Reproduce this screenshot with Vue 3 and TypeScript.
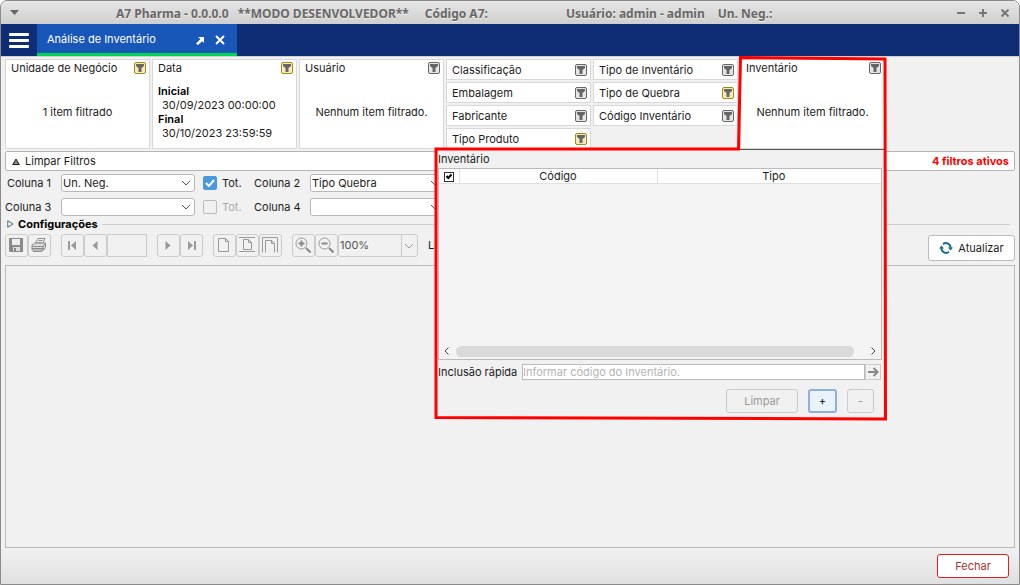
<script setup lang="ts">
import { ref } from 'vue'

interface Filter {
  label: string
  active: boolean
}

const classFilters: Filter[] = [
  { label: 'Classificação', active: false },
  { label: 'Embalagem', active: false },
  { label: 'Fabricante', active: false },
  { label: 'Tipo Produto', active: true },
]
const typeFilters: Filter[] = [
  { label: 'Tipo de Inventário', active: false },
  { label: 'Tipo de Quebra', active: true },
  { label: 'Código Inventário', active: false },
]

const column1 = ref('Un. Neg.')
const column2 = ref('Tipo Quebra')
const column3 = ref('')
const column4 = ref('')
const total1 = ref(true)
const total3 = ref(false)
const allSelected = ref(true)
const quickCode = ref('')
</script>

<template>
  <svg class="defs" width="0" height="0" aria-hidden="true">
    <symbol id="funnel" viewBox="0 0 12 12">
      <rect x="0.5" y="0.5" width="11" height="11" rx="1.5" fill="currentColor" stroke="var(--edge)" />
      <path d="M2 2h8v2L7.500 6V10h-3V6L2 4z" fill="#666" />
    </symbol>
    <symbol id="chevron" viewBox="0 0 10 6">
      <path d="M1 1l4 4 4-4" fill="none" stroke="currentColor" stroke-width="1" />
    </symbol>
  </svg>

  <div class="window">
    <header class="titlebar">
      <button class="tb menu" aria-label="Menu da janela">
        <svg width="9" height="5" viewBox="0 0 9 5"><path d="M0 0h9L4.500 5z" fill="#666" /></svg>
      </button>
      <h1 class="title">
        <span>A7 Pharma - 0.0.0.0</span>
        <span class="mode">**MODO DESENVOLVEDOR**</span>
        <span class="code">Código A7:</span>
        <span class="user">Usuário: admin - admin</span>
        <span>Un. Neg.:</span>
      </h1>
      <div class="controls">
        <button class="tb" aria-label="Minimizar">
          <svg width="8" height="8" viewBox="0 0 8 8"><path d="M0 4h8" stroke="#777" stroke-width="2" /></svg>
        </button>
        <button class="tb" aria-label="Maximizar">
          <svg width="8" height="8" viewBox="0 0 8 8"><path d="M0 4h8M4 0v8" stroke="#777" stroke-width="2" /></svg>
        </button>
        <button class="tb" aria-label="Fechar janela">
          <svg width="8" height="8" viewBox="0 0 8 8"><path d="M.5.5l7 7M7.500.5l-7 7" stroke="#777" stroke-width="2" /></svg>
        </button>
      </div>
    </header>

    <nav class="nav">
      <button class="burger" aria-label="Menu principal"><i></i><i></i><i></i></button>
      <div class="tab">
        <span class="tab-label">Análise de Inventário</span>
        <button aria-label="Destacar aba">
          <svg width="9" height="10" viewBox="0 0 9 10"><path d="M2 2h6v6L6.300 6.300 2 10 0 8.500l4.500-4.500z" fill="#fff" /></svg>
        </button>
        <button aria-label="Fechar aba">
          <svg width="10" height="10" viewBox="0 0 10 10"><path d="M1 1l8 8M9 1L1 9" stroke="#fff" stroke-width="2" /></svg>
        </button>
      </div>
    </nav>

    <main class="content">
      <section class="filters">
        <article class="card">
          <div class="card-head">
            <span>Unidade de Negócio</span>
            <button class="funnel on" aria-label="Filtrar Unidade de Negócio"><svg><use href="#funnel" /></svg></button>
          </div>
          <p class="card-text">1 item filtrado</p>
        </article>
        <article class="card">
          <div class="card-head">
            <span>Data</span>
            <button class="funnel on" aria-label="Filtrar Data"><svg><use href="#funnel" /></svg></button>
          </div>
          <dl class="dates">
            <dt>Inicial</dt>
            <dd>30/09/2023 00:00:00</dd>
            <dt>Final</dt>
            <dd>30/10/2023 23:59:59</dd>
          </dl>
        </article>
        <article class="card">
          <div class="card-head">
            <span>Usuário</span>
            <button class="funnel" aria-label="Filtrar Usuário"><svg><use href="#funnel" /></svg></button>
          </div>
          <p class="card-text">Nenhum item filtrado.</p>
        </article>
        <div v-for="(group, i) in [classFilters, typeFilters]" :key="i" class="stack">
          <div v-for="f in group" :key="f.label" class="mini">
            <span>{{ f.label }}</span>
            <button class="funnel" :class="{ on: f.active }" :aria-label="'Filtrar ' + f.label">
              <svg><use href="#funnel" /></svg>
            </button>
          </div>
        </div>
        <div class="anchor">
          <article class="card">
            <div class="card-head">
              <span>Inventário</span>
              <button class="funnel" aria-label="Filtrar Inventário"><svg><use href="#funnel" /></svg></button>
            </div>
            <p class="card-text">Nenhum item filtrado.</p>
          </article>

          <section class="popup">
            <h2 class="popup-title">Inventário</h2>
            <div class="list">
              <table>
                <thead>
                  <tr>
                    <th class="pick"><input v-model="allSelected" type="checkbox" class="tick small" aria-label="Selecionar todos" /><svg width="8" height="7" viewBox="0 0 8 7"><path d="M1.500 3l1.800 2L6.500 1.500" /></svg></th>
                    <th class="col-code">Código</th>
                    <th class="col-type">Tipo</th>
                  </tr>
                </thead>
                <tbody></tbody>
              </table>
              <div class="scroll">
                <button aria-label="Rolar para a esquerda"><svg width="5" height="8" viewBox="0 0 5 8"><path d="M4.500.5L1 4l3.500 3.500" /></svg></button>
                <div class="thumb"></div>
                <button aria-label="Rolar para a direita"><svg width="5" height="8" viewBox="0 0 5 8"><path d="M.5.5L4 4 .5 7.500" /></svg></button>
              </div>
            </div>
            <div class="quick">
              <label for="quick">Inclusão rápida</label>
              <input id="quick" v-model="quickCode" type="text" placeholder="Informar código do Inventário." />
              <button aria-label="Incluir">
                <svg width="11" height="10" viewBox="0 0 11 10"><path d="M0 5h9M5.500 1l4 4-4 4" fill="none" stroke="#888" stroke-width="2" /></svg>
              </button>
            </div>
            <div class="actions">
              <button class="clear" disabled>Limpar</button>
              <button class="plus">+</button>
              <button class="minus" disabled>-</button>
            </div>
          </section>

          <svg class="outline" viewBox="0 0 454 366" aria-hidden="true">
            <path d="M306.500 2.500L451 4l.5 360L2 362.500V94h302.500z" />
          </svg>
        </div>
      </section>

      <div class="clearbar">
        <button>
          <svg width="8" height="7" viewBox="0 0 8 7"><path d="M4 1L7.300 6.500H.7z" fill="#888" stroke="#222" /></svg>
          Limpar Filtros
        </button>
        <strong>4 filtros ativos</strong>
      </div>

      <div class="columns">
        <label for="c1">Coluna 1</label>
        <div class="select"><select id="c1" v-model="column1"><option>Un. Neg.</option><option value=""></option></select><svg><use href="#chevron" /></svg></div>
        <label class="tot"><input v-model="total1" type="checkbox" class="tick" /><svg width="10" height="8" viewBox="0 0 10 8"><path d="M1 4l3 3L9 1" /></svg>Tot.</label>
        <label for="c2">Coluna 2</label>
        <div class="select"><select id="c2" v-model="column2"><option>Tipo Quebra</option><option value=""></option></select><svg><use href="#chevron" /></svg></div>
        <label for="c3">Coluna 3</label>
        <div class="select"><select id="c3" v-model="column3"><option value=""></option></select><svg><use href="#chevron" /></svg></div>
        <label class="tot off"><input v-model="total3" type="checkbox" class="tick" disabled />Tot.</label>
        <label for="c4">Coluna 4</label>
        <div class="select"><select id="c4" v-model="column4"><option value=""></option></select><svg><use href="#chevron" /></svg></div>
      </div>

      <button class="config">
        <svg width="7" height="8" viewBox="0 0 7 8"><path d="M.8.8L6 4 .8 7.200z" fill="#fff" stroke="#376b72" /></svg>
        <span>Configurações</span>
      </button>

      <div class="tools">
        <div class="toolset">
          <button aria-label="Salvar">
            <svg width="14" height="14" viewBox="0 0 14 14"><path d="M0 0h14v14H1l-1-1z" fill="#8b8b8b" /><path d="M3 1h8v6H3z" fill="#eee" /><path d="M4 9h7v4H4z" fill="#ddd" /><path d="M5 10h2v3H5z" fill="#888" /></svg>
          </button>
          <button aria-label="Imprimir">
            <svg width="16" height="14" viewBox="0 0 16 14" fill="none" stroke="#8b8b8b"><path d="M4 6L7 .5h7L11.500 6M7.500 2.500h4M6.500 4.500h4" /><path d="M1 7l3-2h10.500v4L12 12H1z" fill="#ddd" /><path d="M1 8.500h11l2.500-3M1 10.500h11M2 13.500h9l3-3M12 8v4" /></svg>
          </button>
        </div>
        <div class="toolset">
          <button aria-label="Primeira página"><svg width="9" height="9" viewBox="0 0 9 9"><path d="M0 0h2v9H0zM8 0v9L3 4.500z" fill="#999" /></svg></button>
          <button aria-label="Página anterior"><svg width="6" height="9" viewBox="0 0 6 9"><path d="M5.500 0v9L.5 4.500z" fill="#999" /></svg></button>
          <input class="page" type="text" aria-label="Página" disabled />
        </div>
        <div class="toolset next">
          <button aria-label="Próxima página"><svg width="6" height="9" viewBox="0 0 6 9"><path d="M.5 0v9l5-4.500z" fill="#999" /></svg></button>
          <button aria-label="Última página"><svg width="9" height="9" viewBox="0 0 9 9"><path d="M1 0v9l5-4.500zM7 0h2v9H7z" fill="#999" /></svg></button>
        </div>
        <div class="toolset">
          <button aria-label="Tamanho real"><svg width="12" height="14" viewBox="0 0 12 14"><path d="M.5.5h7l3 3v10H.5zM7.500.5v3h3" class="line" /></svg></button>
          <button aria-label="Página inteira"><svg width="16" height="16" viewBox="0 0 16 16"><path d="M0 .5h16M0 14.500h16M4.500 2.500h5l3 3v7h-8zM9.500 2.500v3h3" class="line" /></svg></button>
          <button aria-label="Largura da página"><svg width="16" height="16" viewBox="0 0 16 16"><path d="M.5 15.500V.5h15v15M3.500 15.500v-12h6l3 3v9M9.500 3.500v3h3" class="line" /></svg></button>
        </div>
        <div class="toolset">
          <button aria-label="Aumentar zoom"><svg width="16" height="16" viewBox="0 0 16 16"><circle cx="6.500" cy="6.500" r="5.500" class="line" /><path d="M6.500 3.500v6M3.500 6.500h6" stroke="#888" stroke-width="2" /><path d="M11 11l4.500 4.500" stroke="#888" stroke-width="2" /></svg></button>
          <button aria-label="Diminuir zoom"><svg width="16" height="16" viewBox="0 0 16 16"><circle cx="6.500" cy="6.500" r="5.500" class="line" /><path d="M3.500 6.500h6" stroke="#888" stroke-width="2" /><path d="M11 11l4.500 4.500" stroke="#888" stroke-width="2" /></svg></button>
          <div class="select zoom"><select aria-label="Zoom" disabled><option>100%</option></select><svg><use href="#chevron" /></svg></div>
        </div>
        <span class="lines">Linhas</span>
        <button class="refresh">
          <svg width="14" height="12" viewBox="0 0 14 12"><g fill="none" stroke="#1d6f83" stroke-width="2"><path d="M4 2.200A4.600 4.600 0 0 1 11.500 6M10 9.800A4.600 4.600 0 0 1 2.500 6" /></g><path d="M9 5.500h5L11.500 8.500zM0 6.500h5L2.500 3.500z" fill="#1d6f83" /></svg>
          Atualizar
        </button>
      </div>

      <section class="report" aria-label="Relatório"></section>
    </main>

    <footer class="footer"><button class="close">Fechar</button></footer>
  </div>
</template>

<style>
body {
  background: #fff;
}
</style>

<style scoped>
.defs {
  position: absolute;
}
.window,
.window * {
  box-sizing: border-box;
}
.window {
  display: flex;
  flex-direction: column;
  min-height: 100vh;
  border: 1px solid #8a8a8a;
  border-radius: 7px 7px 0 0;
  overflow: hidden;
  background: #f1f1f1;
  color: #1c1c1c;
  font: 11px/14px Inter, "Open Sans", sans-serif;
}
.window svg {
  display: block;
  flex: none;
}
button,
input,
select {
  margin: 0;
  padding: 0;
  border: 0;
  background: none;
  color: inherit;
  font: inherit;
}
.titlebar {
  display: flex;
  align-items: center;
  height: 23px;
  padding: 0 10px 0 9px;
  background: linear-gradient(#e6e6e6, #cfcfcf);
}
.tb {
  display: flex;
}
.title {
  flex: 1;
  display: flex;
  gap: 9px;
  margin: 0;
  padding: 2px 0 0 97px;
  color: #686868;
  font: bold 12px/18px "Noto Sans", sans-serif;
  text-shadow: 0 1px #eee;
  white-space: nowrap;
}
.mode {
  margin-right: 7px;
}
.code {
  margin-right: 69px;
}
.user {
  margin-right: 4px;
}
.controls {
  display: flex;
  gap: 14px;
}
.nav {
  display: flex;
  height: 32px;
  background: #0e2d75;
}
.burger {
  display: flex;
  flex-direction: column;
  justify-content: center;
  gap: 3px;
  width: 36px;
  padding-left: 8px;
}
.burger i {
  width: 20px;
  height: 3px;
  border-radius: 1px;
  background: #fff;
}
.tab {
  display: flex;
  align-items: center;
  gap: 10px;
  width: 200px;
  padding: 3px 12px 0 10px;
  border-bottom: 3px solid #00d455;
  background: #1857b8;
  color: #fff;
}
.tab-label {
  flex: 1;
  padding-bottom: 2px;
}
.content {
  flex: 1;
  display: flex;
  flex-direction: column;
  padding: 2px 4px 0;
  border-top: 1px solid #d0d0d0;
}
.filters {
  display: grid;
  grid-template-columns: repeat(6, 145px);
  gap: 2px;
  height: 90px;
}
.card,
.mini {
  border: 1px solid #d8d8d8;
  background: #fff;
}
.card {
  display: flex;
  flex-direction: column;
  height: 90px;
}
.card-head,
.mini {
  display: flex;
  align-items: center;
  justify-content: space-between;
  padding: 0 3px 0 5px;
}
.card-head {
  height: 15px;
}
.card-text {
  flex: 1;
  margin: 0;
  padding-top: 30px;
  text-align: center;
}
.dates {
  margin: 9px 0 0 5px;
}
.dates dt {
  color: #000;
  font-weight: 600;
}
.dates dd {
  margin: 0 0 0 4px;
}
.stack {
  display: flex;
  flex-direction: column;
  gap: 2px;
}
.mini {
  height: 21px;
}
.funnel {
  --edge: #666;
  color: #e6e6e6;
}
.funnel.on {
  --edge: #a98a10;
  color: #f3ebbc;
}
.funnel svg {
  width: 12px;
  height: 12px;
}
.anchor {
  position: relative;
}
.popup {
  position: absolute;
  z-index: 1;
  top: 90px;
  right: 0;
  width: 448px;
  height: 270px;
  padding: 0 3px 0 1px;
  border-top: 1px solid #555;
  background: #f1f1f1;
}
.popup-title {
  margin: 0;
  font: inherit;
  line-height: 18px;
}
.list {
  display: flex;
  flex-direction: column;
  justify-content: space-between;
  height: 192px;
  border: 1px solid #bbb;
  background: #f4f4f4;
}
.list table {
  width: 100%;
  border-collapse: collapse;
  table-layout: fixed;
  background: #fff;
}
.list th {
  height: 14px;
  padding: 0;
  border-right: 1px solid #e0e0e0;
  border-bottom: 1px solid #e0e0e0;
  font-weight: 400;
  line-height: 14px;
}
.list .col-type {
  padding-left: 9px;
  border-right: 0;
}
.pick {
  position: relative;
  width: 20px;
}
.col-code {
  width: 198px;
}
.tick {
  appearance: none;
  display: block;
  width: 14px;
  height: 14px;
  border: 1px solid #bbb;
  border-radius: 2px;
}
.tick:checked {
  border-color: #4a98e0;
  background: #4a98e0;
}
.tick.small {
  width: 10px;
  height: 10px;
  margin: 1px auto 0;
  border: 1px solid #333;
  border-radius: 0;
  background: #fff;
}
.pick svg {
  position: absolute;
  top: 4px;
  left: 6px;
  fill: none;
  stroke: #000;
  stroke-width: 2;
  pointer-events: none;
}
.scroll {
  display: flex;
  align-items: center;
  justify-content: space-between;
  height: 16px;
  padding: 0 5px;
}
.scroll path {
  fill: none;
  stroke: #444;
  stroke-width: 1;
}
.thumb {
  flex: 1;
  height: 11px;
  margin: 0 17px 0 7px;
  border-radius: 6px;
  background: #dadada;
}
.quick {
  display: flex;
  align-items: center;
  height: 16px;
  margin: 4px 1px 0 0;
}
.quick label {
  width: 84px;
}
.quick input {
  flex: 1;
  height: 16px;
  border: 1px solid #bbb;
  background: #fff;
}
.quick input::placeholder {
  color: #b4b4b4;
  opacity: 1;
}
.quick button {
  display: flex;
  align-items: center;
  justify-content: center;
  width: 16px;
  height: 16px;
  border: 1px solid #ccc;
}
.actions {
  display: flex;
  justify-content: flex-end;
  gap: 10px;
  margin: 9px 8px 0 0;
}
.actions button {
  width: 27px;
  height: 24px;
  border: 1px solid #ccc;
  border-radius: 3px;
  color: #999;
}
.actions .clear {
  width: 72px;
}
.actions .plus {
  width: 29px;
  border: 2px solid #8db1d8;
  background: #eaf3fc;
  color: #000;
}
.outline {
  position: absolute;
  z-index: 2;
  top: -4px;
  right: -3px;
  width: 454px;
  height: 366px;
  fill: none;
  stroke: #f00;
  stroke-width: 3;
  pointer-events: none;
}
.clearbar {
  display: flex;
  align-items: center;
  justify-content: space-between;
  height: 20px;
  margin-top: 2px;
  padding: 0 5px 0 6px;
  border: 1px solid #b4b4b4;
  border-radius: 2px;
  background: #fff;
}
.clearbar button {
  display: flex;
  align-items: center;
  gap: 5px;
}
.clearbar strong {
  color: #f00;
  font-weight: 700;
}
.columns {
  display: grid;
  grid-template-columns: 48px 134px 43px 48px 134px;
  column-gap: 8px;
  row-gap: 6px;
  align-items: center;
  margin-top: 3px;
}
.columns > label:not(.tot) {
  padding-right: 2px;
  text-align: right;
  white-space: nowrap;
}
.select {
  position: relative;
  height: 18px;
  border: 1px solid #b8b8b8;
  border-radius: 3px;
  background: #fff;
}
.select select {
  appearance: none;
  display: block;
  width: 100%;
  height: 16px;
  padding-left: 1px;
}
.select svg {
  position: absolute;
  top: 5px;
  right: 3px;
  width: 10px;
  height: 6px;
  color: #555;
  pointer-events: none;
}
.tot {
  position: relative;
  display: flex;
  align-items: center;
  gap: 5px;
}
.tot svg {
  position: absolute;
  left: 2px;
  fill: none;
  stroke: #fff;
  stroke-width: 2;
}
.off {
  color: #aaa;
}
.config {
  display: flex;
  align-items: center;
  gap: 4px;
  height: 16px;
  padding: 0 5px 0 2px;
  color: #000;
  font-weight: 700;
}
.config::after {
  content: "";
  flex: 1;
  border-top: 1px solid #ccc;
}
.tools {
  display: flex;
  align-items: flex-start;
  gap: 10px;
  margin-top: 2px;
}
.toolset {
  display: flex;
}
.toolset button {
  display: flex;
  align-items: center;
  justify-content: center;
  width: 23px;
  height: 23px;
  padding: 0 1px 1px 0;
  border: 1px solid #ccc;
  border-radius: 3px;
}
.line {
  fill: none;
  stroke: #999;
}
.page {
  width: 40px;
  height: 23px;
  border: 1px solid #ccc;
}
.zoom {
  width: 80px;
  height: 23px;
  border-color: #ccc;
  background: #f1f1f1;
}
.zoom select {
  height: 21px;
  padding-bottom: 1px;
  color: #555;
  opacity: 1;
}
.zoom::after {
  content: "";
  position: absolute;
  inset: 0 15px 0 auto;
  border-left: 1px solid #ccc;
}
.zoom svg {
  top: 8px;
  color: #999;
}
.lines {
  line-height: 22px;
}
.refresh {
  display: flex;
  align-items: center;
  justify-content: center;
  gap: 5px;
  width: 87px;
  height: 26px;
  margin: 1px 0 0 auto;
  border: 1px solid #bbb;
  border-radius: 3px;
  background: #fff;
}
.report {
  flex: 1;
  margin-top: 4px;
  border: 1px solid #bbb;
}
.footer {
  display: flex;
  justify-content: flex-end;
  padding: 6px 10px;
  background: linear-gradient(#f1f1f1, #e0e0e0);
}
.close {
  width: 72px;
  height: 24px;
  border: 1px solid #e02020;
  border-radius: 3px;
  background: #fff;
  color: #a83232;
}
</style>
